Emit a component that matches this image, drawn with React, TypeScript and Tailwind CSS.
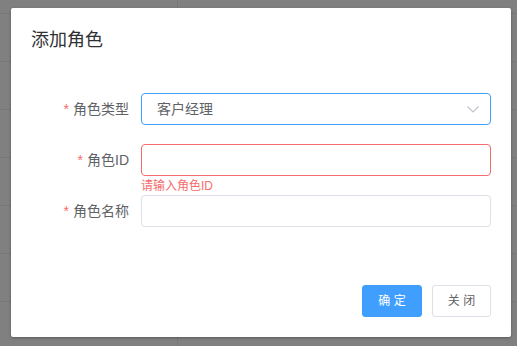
export default function App() {
  const rows = [0, 1, 2, 3, 4, 5, 6, 7];
  return (
    <div className="relative w-[517px] h-[346px] overflow-hidden bg-[#808080] font-['Liberation_Sans','Noto_Sans_CJK_SC',sans-serif]">
      <div className="flex flex-col">
        <div className="flex h-[14px] border-b border-[#787878]">
          <div className="w-[178px] border-r border-[#787878]" />
        </div>
        {rows.map((i) => (
          <div key={i} className="flex h-[48px] shrink-0 border-b border-[#787878]">
            <div className="w-[178px] border-r border-[#787878]" />
          </div>
        ))}
      </div>

      <div className="absolute left-[11px] top-[8px] w-[500px] rounded-[2px] bg-white shadow-[0_1px_3px_rgba(0,0,0,0.3)]">
        <div className="px-[20px] pt-[20px] pb-[10px] text-[18px] leading-[24px] text-[#303133]">
          添加角色
        </div>

        <div className="px-[20px] pt-[31px] pb-[29px]">
          <div className="mb-[19px] flex">
            <label className="w-[110px] pr-[12px] text-right text-[14px] leading-[32px] text-[#606266]">
              <span className="mr-[4px] text-[#F56C6C]">*</span>角色类型
            </label>
            <div className="flex h-[32px] w-[350px] items-center justify-between rounded-[4px] border border-[#409EFF] pl-[15px] pr-[11px]">
              <span className="text-[14px] text-[#606266]">客户经理</span>
              <svg width="12" height="7" viewBox="0 0 12 7" fill="none">
                <polyline points="0.5,0.5 6,6 11.5,0.5" stroke="#C0C4CC" strokeWidth="1.1" />
              </svg>
            </div>
          </div>

          <div className="mb-[19px] flex">
            <label className="w-[110px] pr-[12px] text-right text-[14px] leading-[32px] text-[#606266]">
              <span className="mr-[4px] text-[#F56C6C]">*</span>角色ID
            </label>
            <div className="relative">
              <div className="h-[32px] w-[350px] rounded-[4px] border border-[#F56C6C]" />
              <div className="absolute left-0 top-full pt-[4px] text-[12px] leading-none text-[#F56C6C]">
                请输入角色ID
              </div>
            </div>
          </div>

          <div className="mb-[19px] flex">
            <label className="w-[110px] pr-[12px] text-right text-[14px] leading-[32px] text-[#606266]">
              <span className="mr-[4px] text-[#F56C6C]">*</span>角色名称
            </label>
            <div className="h-[32px] w-[350px] rounded-[4px] border border-[#DCDFE6]" />
          </div>
        </div>

        <div className="flex justify-end px-[20px] pt-[10px] pb-[20px]">
          <button className="h-[32px] w-[60px] rounded-[3px] border border-[#409EFF] bg-[#409EFF] text-[12px] text-white">
            确 定
          </button>
          <button className="ml-[10px] h-[32px] w-[59px] rounded-[3px] border border-[#DCDFE6] bg-white text-[12px] text-[#606266]">
            关 闭
          </button>
        </div>
      </div>
    </div>
  );
}
